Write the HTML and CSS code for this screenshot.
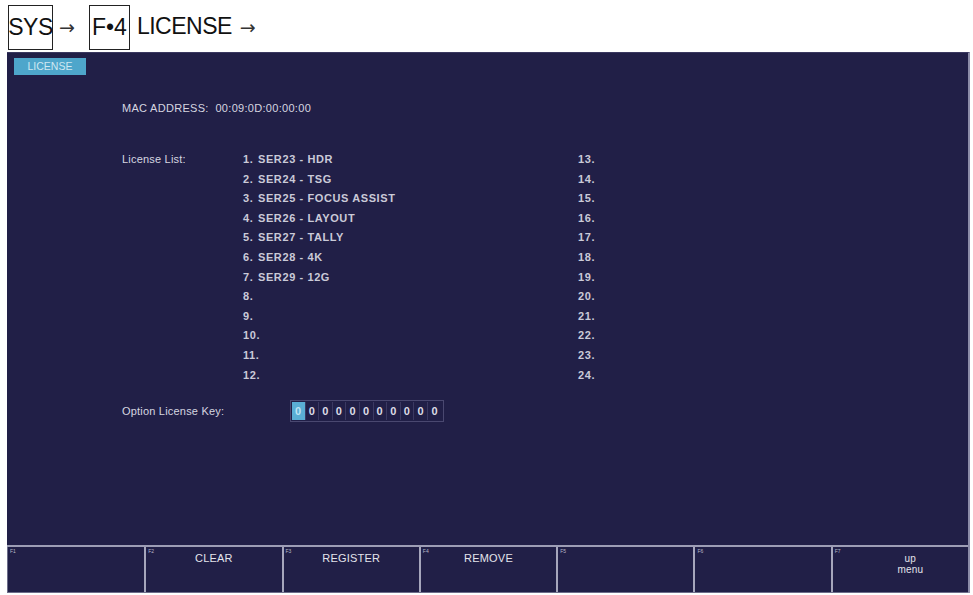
FILE: index.html
```html
<!DOCTYPE html>
<html>
<head>
<meta charset="utf-8">
<link rel="stylesheet" href="styles.css">
</head>
<body>
<div class="crumbs">
  <span class="key k1">SYS</span>
  <span class="arrow">→</span>
  <span class="key k2">F•4</span>
  <span class="word">LICENSE</span>
  <span class="arrow last">→</span>
</div>
<div class="screen">
  <div class="main">
    <div class="tab">LICENSE</div>
    <div class="mac">MAC ADDRESS:&nbsp; 00:09:0D:00:00:00</div>
    <div class="list">
      <div class="label">License List:</div>
      <div class="col">
        <div class="item"><span class="n">1.</span>SER23 - HDR</div>
        <div class="item"><span class="n">2.</span>SER24 - TSG</div>
        <div class="item"><span class="n">3.</span>SER25 - FOCUS ASSIST</div>
        <div class="item"><span class="n">4.</span>SER26 - LAYOUT</div>
        <div class="item"><span class="n">5.</span>SER27 - TALLY</div>
        <div class="item"><span class="n">6.</span>SER28 - 4K</div>
        <div class="item"><span class="n">7.</span>SER29 - 12G</div>
        <div class="item"><span class="n">8.</span></div>
        <div class="item"><span class="n">9.</span></div>
        <div class="item"><span class="n">10.</span></div>
        <div class="item"><span class="n">11.</span></div>
        <div class="item"><span class="n">12.</span></div>
      </div>
      <div class="col col2">
        <div class="item">13.</div>
        <div class="item">14.</div>
        <div class="item">15.</div>
        <div class="item">16.</div>
        <div class="item">17.</div>
        <div class="item">18.</div>
        <div class="item">19.</div>
        <div class="item">20.</div>
        <div class="item">21.</div>
        <div class="item">22.</div>
        <div class="item">23.</div>
        <div class="item">24.</div>
      </div>
    </div>
    <div class="keyrow">
      <div class="label">Option License Key:</div>
      <div class="digits">
        <span class="d sel">0</span><span class="d">0</span><span class="d">0</span><span class="d">0</span><span class="d">0</span><span class="d">0</span><span class="d">0</span><span class="d">0</span><span class="d">0</span><span class="d">0</span><span class="d">0</span>
      </div>
    </div>
  </div>
  <div class="softkeys">
    <div class="sk"><span class="fn">F1</span></div>
    <div class="sk"><span class="fn">F2</span><span class="skl">CLEAR</span></div>
    <div class="sk"><span class="fn">F3</span><span class="skl">REGISTER</span></div>
    <div class="sk"><span class="fn">F4</span><span class="skl">REMOVE</span></div>
    <div class="sk"><span class="fn">F5</span></div>
    <div class="sk"><span class="fn">F6</span></div>
    <div class="sk"><span class="fn">F7</span><span class="skl two">up<br>menu</span></div>
  </div>
</div>
</body>
</html>
```

FILE: styles.css
```css
* { box-sizing: border-box; }
html, body { margin: 0; padding: 0; background: #ffffff; }
body { width: 973px; height: 595px; overflow: hidden; font-family: "Liberation Sans", Arial, sans-serif; }

.crumbs {
  height: 52px;
  display: flex;
  align-items: center;
  padding-left: 8px;
  font-family: "Liberation Sans", Arial, sans-serif;
  font-size: 23px;
  color: #111;
}
.crumbs .key {
  display: inline-flex;
  align-items: center;
  justify-content: center;
  height: 45px;
  border: 1px solid #222;
  line-height: 1;
  margin-top: 3px;
}
.crumbs .k1 { width: 45px; letter-spacing: -0.5px; }
.crumbs .k2 { width: 41px; }
.crumbs .arrow {
  font-family: "DejaVu Sans", sans-serif;
  font-size: 19px;
  margin: 2px 14px 0 6px;
  color: #333;
}
.crumbs .word { margin-left: 7px; letter-spacing: -0.5px; }
.crumbs .arrow.last { margin-left: 8px; }

.screen {
  margin-left: 7px;
  width: 963px;
  height: 541px;
  background: #211f47;
  display: flex;
  flex-direction: column;
  border-right: 2px solid #8c8ca8;
  border-top: 1px solid #3a3860;
}
.main {
  flex: 1;
  position: relative;
  padding: 5px 0 0 7px;
  color: #d6d6e0;
  font-size: 11px;
  letter-spacing: 0.4px;
}
.tab {
  width: 72px;
  height: 17px;
  background: #4ea6cb;
  color: #cfe8f2;
  font-size: 10.5px;
  line-height: 17px;
  text-align: center;
  letter-spacing: 0;
}
.mac {
  margin: 26px 0 0 108px;
  line-height: 14px;
  letter-spacing: 0.3px;
}
.list {
  display: flex;
  margin: 35px 0 0 108px;
}
.list .label { width: 121px; line-height: 19.6px; letter-spacing: 0.2px; }
.col { width: 335px; }
.item { height: 19.6px; line-height: 19.6px; white-space: nowrap; font-weight: bold; color: #cacad8; letter-spacing: 0.6px; }
.item .n { display: inline-block; width: 15px; }
.keyrow {
  display: flex;
  align-items: center;
  margin: 15px 0 0 108px;
}
.keyrow .label { width: 168px; letter-spacing: 0.2px; }
.digits {
  display: flex;
  border: 1px solid #4a4870;
  padding: 1px;
}
.d {
  width: 13.6px;
  height: 18px;
  line-height: 18px;
  text-align: center;
  font-weight: bold;
  font-size: 11px;
  color: #dcdce6;
  border-right: 1px solid #3b3962;
}
.d:last-child { border-right: none; }
.d.sel { background: #5aaed4; color: #bfe4f4; }

.softkeys {
  height: 48px;
  display: grid;
  grid-template-columns: repeat(7, 1fr);
  border-top: 2px solid #9d9db5;
  border-bottom: 1px solid #6d6d8a;
}
.sk {
  position: relative;
  border-left: 2px solid #a6a6bc;
  display: flex;
  justify-content: center;
  color: #e4e4ec;
  font-size: 11px;
}
.sk:first-child { border-left: 1px solid #6d6d8a; }
.fn {
  position: absolute;
  left: 2px;
  top: 1px;
  font-size: 5px;
  color: #b8b8c8;
  letter-spacing: 0;
}
.skl { margin-top: 5px; line-height: 13px; text-align: center; letter-spacing: 0.2px; }
.skl.two { font-size: 10px; line-height: 11px; margin-top: 6px; margin-left: 20px; }
```
